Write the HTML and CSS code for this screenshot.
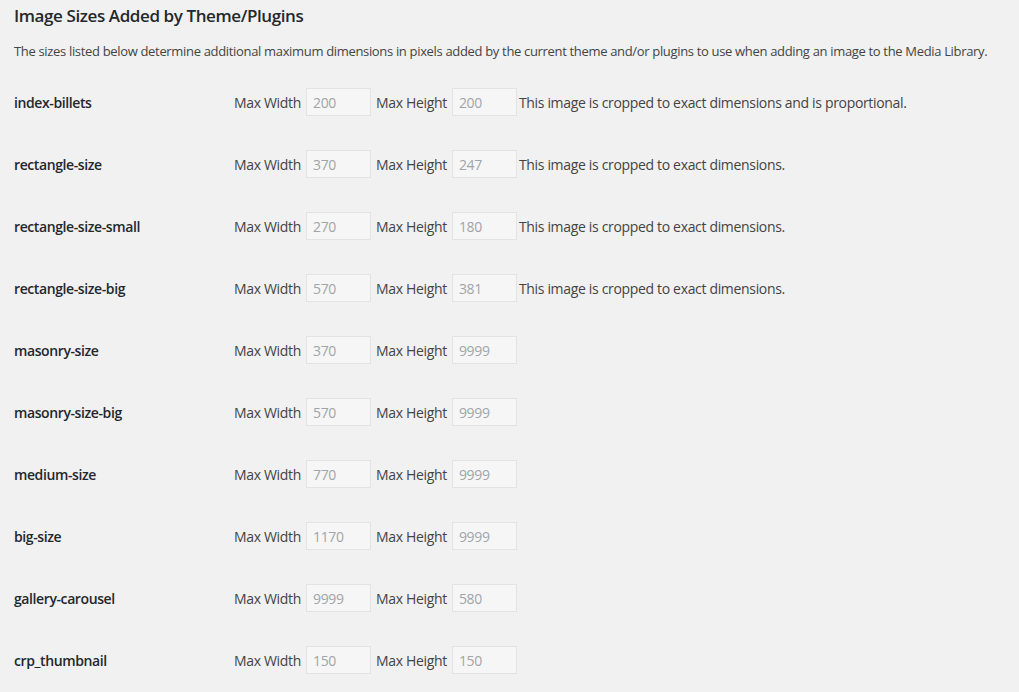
FILE: index.html
```html
<!DOCTYPE html>
<html>

<head>
    <title>Media Settings</title>
    <link rel="stylesheet" href="styles.css">
</head>

<body>
    <div class="wrap">
        <h2 class="title">Image Sizes Added by Theme/Plugins</h2>
        <p class="desc">The sizes listed below determine additional maximum dimensions in pixels added by the current theme and/or plugins to use when adding an image to the Media Library.</p>

        <div class="sizes">
            <div class="size-row">
                <div class="size-name">index-billets</div>
                <div class="size-fields">
                    <label>Max Width</label><input type="text" class="small-text" value="200" disabled>
                    <label>Max Height</label><input type="text" class="small-text" value="200" disabled>
                    <span class="note">This image is cropped to exact dimensions and is proportional.</span>
                </div>
            </div>
            <div class="size-row">
                <div class="size-name">rectangle-size</div>
                <div class="size-fields">
                    <label>Max Width</label><input type="text" class="small-text" value="370" disabled>
                    <label>Max Height</label><input type="text" class="small-text" value="247" disabled>
                    <span class="note">This image is cropped to exact dimensions.</span>
                </div>
            </div>
            <div class="size-row">
                <div class="size-name">rectangle-size-small</div>
                <div class="size-fields">
                    <label>Max Width</label><input type="text" class="small-text" value="270" disabled>
                    <label>Max Height</label><input type="text" class="small-text" value="180" disabled>
                    <span class="note">This image is cropped to exact dimensions.</span>
                </div>
            </div>
            <div class="size-row">
                <div class="size-name">rectangle-size-big</div>
                <div class="size-fields">
                    <label>Max Width</label><input type="text" class="small-text" value="570" disabled>
                    <label>Max Height</label><input type="text" class="small-text" value="381" disabled>
                    <span class="note">This image is cropped to exact dimensions.</span>
                </div>
            </div>
            <div class="size-row">
                <div class="size-name">masonry-size</div>
                <div class="size-fields">
                    <label>Max Width</label><input type="text" class="small-text" value="370" disabled>
                    <label>Max Height</label><input type="text" class="small-text" value="9999" disabled>
                </div>
            </div>
            <div class="size-row">
                <div class="size-name">masonry-size-big</div>
                <div class="size-fields">
                    <label>Max Width</label><input type="text" class="small-text" value="570" disabled>
                    <label>Max Height</label><input type="text" class="small-text" value="9999" disabled>
                </div>
            </div>
            <div class="size-row">
                <div class="size-name">medium-size</div>
                <div class="size-fields">
                    <label>Max Width</label><input type="text" class="small-text" value="770" disabled>
                    <label>Max Height</label><input type="text" class="small-text" value="9999" disabled>
                </div>
            </div>
            <div class="size-row">
                <div class="size-name">big-size</div>
                <div class="size-fields">
                    <label>Max Width</label><input type="text" class="small-text" value="1170" disabled>
                    <label>Max Height</label><input type="text" class="small-text" value="9999" disabled>
                </div>
            </div>
            <div class="size-row">
                <div class="size-name">gallery-carousel</div>
                <div class="size-fields">
                    <label>Max Width</label><input type="text" class="small-text" value="9999" disabled>
                    <label>Max Height</label><input type="text" class="small-text" value="580" disabled>
                </div>
            </div>
            <div class="size-row">
                <div class="size-name">crp_thumbnail</div>
                <div class="size-fields">
                    <label>Max Width</label><input type="text" class="small-text" value="150" disabled>
                    <label>Max Height</label><input type="text" class="small-text" value="150" disabled>
                </div>
            </div>
        </div>
    </div>
</body>

</html>
```

FILE: styles.css
```css
/* Reset default margins and paddings for the whole page */
html, body {
  margin: 0;
  padding: 0;
}

body {
  background-color: #f1f1f1;
  color: #444;
  font-family: "Open Sans", "Noto Sans", sans-serif;
  font-size: 14px;
  letter-spacing: -0.33px;
}

.wrap {
  padding: 0 14px;
}

/* Section heading */
.title {
  color: #23282d;
  font-size: 17px;
  font-weight: 600;
  letter-spacing: -0.4px;
  margin: 0;
  padding-top: 4px;
  line-height: 24px;
}

.desc {
  font-size: 13px;
  letter-spacing: -0.33px;
  margin: 13px 0 0;
  line-height: 20px;
  white-space: nowrap;
}

/* Rows of sizes */
.sizes {
  margin-top: 10px;
}

.size-row {
  display: flex;
  align-items: center;
  height: 62px;
}

.size-name {
  width: 220px;
  color: #23282d;
  font-weight: 600;
  letter-spacing: -0.4px;
}

.size-fields {
  display: flex;
  align-items: center;
}

.size-fields label {
  margin-right: 5px;
}

.small-text {
  width: 65px;
  height: 28px;
  box-sizing: border-box;
  padding: 3px 6px;
  margin: 0 5px 0 0;
  border: 1px solid #e3e3e3;
  background-color: #f6f6f6;
  color: #a0a5aa;
  font-family: inherit;
  font-size: 14px;
  letter-spacing: -0.33px;
  box-shadow: none;
}

.note {
  margin-left: -3px;
}
```
